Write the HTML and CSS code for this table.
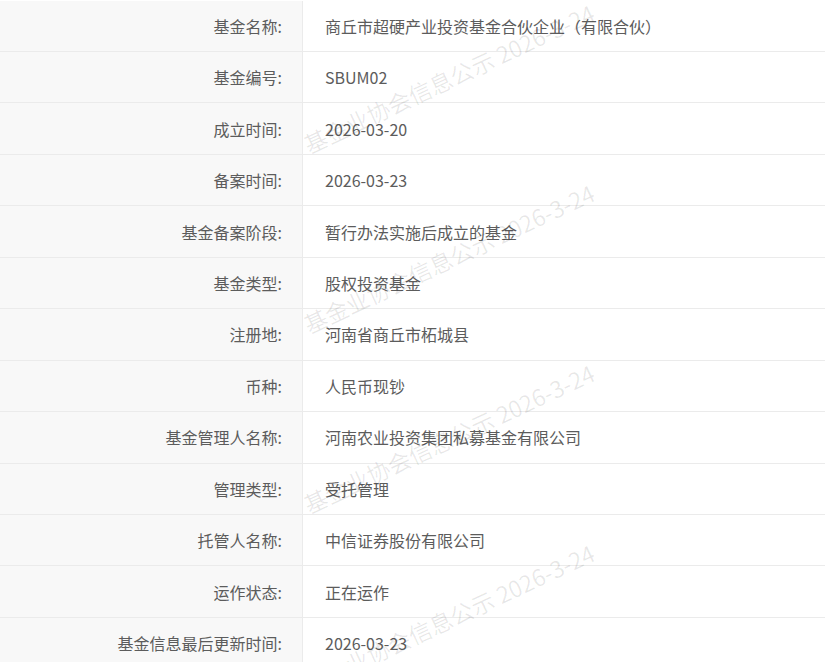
FILE: index.html
```html
<!DOCTYPE html>
<html lang="zh-CN">
<head>
<meta charset="utf-8">
<title>基金信息</title>
<link rel="stylesheet" href="styles.css">
</head>
<body>
<div class="page">
  <div class="info">
    <div class="row"><div class="label">基金名称:</div><div class="value">商丘市超硬产业投资基金合伙企业（有限合伙）</div></div>
    <div class="row"><div class="label">基金编号:</div><div class="value">SBUM02</div></div>
    <div class="row"><div class="label">成立时间:</div><div class="value">2026-03-20</div></div>
    <div class="row"><div class="label">备案时间:</div><div class="value">2026-03-23</div></div>
    <div class="row"><div class="label">基金备案阶段:</div><div class="value">暂行办法实施后成立的基金</div></div>
    <div class="row"><div class="label">基金类型:</div><div class="value">股权投资基金</div></div>
    <div class="row"><div class="label">注册地:</div><div class="value">河南省商丘市柘城县</div></div>
    <div class="row"><div class="label">币种:</div><div class="value">人民币现钞</div></div>
    <div class="row"><div class="label">基金管理人名称:</div><div class="value">河南农业投资集团私募基金有限公司</div></div>
    <div class="row"><div class="label">管理类型:</div><div class="value">受托管理</div></div>
    <div class="row"><div class="label">托管人名称:</div><div class="value">中信证券股份有限公司</div></div>
    <div class="row"><div class="label">运作状态:</div><div class="value">正在运作</div></div>
    <div class="row"><div class="label">基金信息最后更新时间:</div><div class="value">2026-03-23</div></div>
  </div>
  <div class="watermarks" aria-hidden="true">
    <span class="wm wm-1">基金业协会信息公示 2026-3-24</span>
    <span class="wm wm-2">基金业协会信息公示 2026-3-24</span>
    <span class="wm wm-3">基金业协会信息公示 2026-3-24</span>
    <span class="wm wm-4">基金业协会信息公示 2026-3-24</span>
  </div>
</div>
</body>
</html>
```
FILE: styles.css
```css
html, body {
  margin: 0;
  padding: 0;
  background: #fff;
}
body {
  font-family: "Noto Sans CJK SC", "Noto Sans", sans-serif;
  font-size: 16px;
  color: #5c5c5c;
  overflow: hidden;
}
.page {
  position: relative;
  width: 825px;
}
.info {
  display: flex;
  flex-direction: column;
  padding-top: 0.6px;
}
.row {
  display: grid;
  grid-template-columns: 303px 1fr;
  height: 51.45px;
  box-sizing: border-box;
  border-bottom: 1px solid #ebebeb;
}
.label {
  background: #f8f8f8;
  border-right: 1px solid #ebebeb;
  display: flex;
  align-items: center;
  justify-content: flex-end;
  padding-right: 20px;
  white-space: nowrap;
}
.value {
  display: flex;
  align-items: center;
  padding-left: 22px;
  white-space: nowrap;
}
.watermarks {
  position: absolute;
  inset: 0;
  pointer-events: none;
  overflow: hidden;
}
.wm {
  position: absolute;
  left: 310px;
  font-size: 23px;
  line-height: 23px;
  height: 23px;
  white-space: nowrap;
  color: rgba(0, 0, 0, 0.09);
  transform-origin: 0 100%;
  transform: rotate(-25deg);
}
.wm-1 { top: 133px; }
.wm-2 { top: 313px; }
.wm-3 { top: 493px; }
.wm-4 { top: 673px; }
```
